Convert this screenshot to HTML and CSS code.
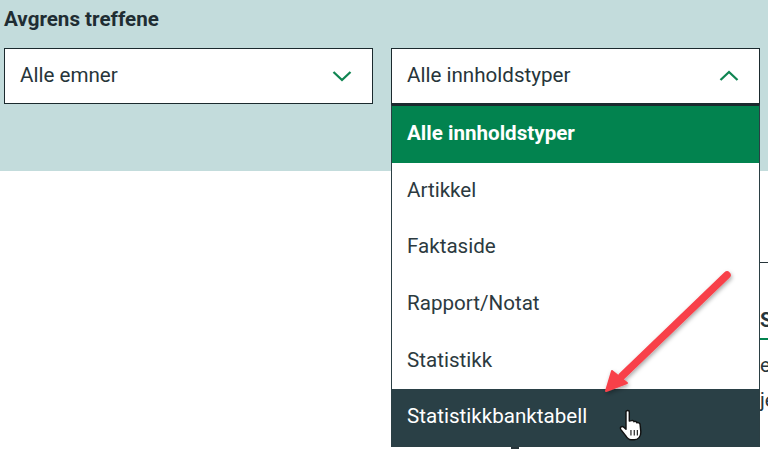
FILE: index.html
```html
<!DOCTYPE html>
<html lang="no">
<head>
<meta charset="utf-8">
<title>Avgrens treffene</title>
<link rel="stylesheet" href="styles.css">
</head>
<body>
<section class="band">
  <h2 class="title">Avgrens treffene</h2>
  <div class="filters">
    <div class="select">
      <span>Alle emner</span>
      <svg class="chev" width="20" height="12" viewBox="0 0 20 12"><path d="M1.5 2 L10 10 L18.500 2" fill="none" stroke="#0f8552" stroke-width="2.300"/></svg>
    </div>
    <div class="select-wrap">
      <div class="select">
        <span>Alle innholdstyper</span>
        <svg class="chev" width="20" height="12" viewBox="0 0 20 12"><path d="M1.5 10 L10 2 L18.500 10" fill="none" stroke="#0f8552" stroke-width="2.300"/></svg>
      </div>
      <ul class="menu">
        <li class="item selected">Alle innholdstyper</li>
        <li class="item">Artikkel</li>
        <li class="item">Faktaside</li>
        <li class="item">Rapport/Notat</li>
        <li class="item">Statistikk</li>
        <li class="item hover">Statistikkbanktabell</li>
      </ul>
    </div>
  </div>
</section>
<aside class="behind">
  <span class="frag head">S</span>
  <span class="frag rule"></span>
  <span class="frag l1">e</span>
  <span class="frag l2">je</span>
  <span class="frag tick"></span>
</aside>
<svg class="arrow" width="768" height="455" viewBox="0 0 768 455">
  <defs><filter id="sh" x="-20%" y="-20%" width="140%" height="140%"><feDropShadow dx="1" dy="2" stdDeviation="2" flood-color="#000" flood-opacity=".35"/></filter></defs>
  <g filter="url(#sh)">
    <path d="M727 275 L622 376" stroke="#f8414a" stroke-width="7.500" stroke-linecap="round" fill="none"/>
    <path d="M606 391 L612 371 L627 383 Z" fill="#f8414a" stroke="#f8414a" stroke-width="2" stroke-linejoin="round"/>
  </g>
</svg>
<svg class="cursor" width="27" height="33" viewBox="0 0 24 30">
  <path d="M7 2.5 C7 1 10 1 10 2.5 V11 L12 10.6 C13 10.2 14 10.6 14.3 11.5 C15.3 11 16.6 11.4 16.9 12.5 C18 12 19.6 12.6 19.8 14 L20.500 21 C20.600 25 18 28 14.500 28 H11.500 C9 28 8 26.500 6.500 24 L2.200 18.500 C1 16.600 3.400 15 5 16.500 L7 18.500 Z" fill="#fff" stroke="#111" stroke-width="1.300" stroke-linejoin="round"/>
  <path d="M11.500 19V24M14.500 19V24M17.300 19V24" stroke="#111" stroke-width="1"/>
</svg>
</body>
</html>
```
FILE: styles.css
```css
* { box-sizing: border-box; }
html, body { margin: 0; height: 455px; overflow: hidden; background: #fff; }
body { position: relative; font-family: Roboto, "Liberation Sans", sans-serif; color: #27353a; }
.band { height: 171px; background: #c3dcdc; padding: 8px 8px 0 4px; }
.title { margin: 0 0 18px; font-size: 20.6px; line-height: 22px; font-weight: 700; color: #1f2d33; }
.filters { display: grid; grid-template-columns: 369px 369px; column-gap: 18px; }
.select { height: 56px; border: 1px solid #1b2a2e; background: #fff; display: flex; align-items: center; justify-content: space-between; padding: 0 20px 2px 15px; font-size: 20.6px; }
.chev { margin-top: 2px; }
.select-wrap { position: relative; z-index: 2; }
.menu { list-style: none; margin: 0; padding: 0; border: 1px solid #2b3f44; border-top: 2px solid #1b2a2e; background: #fff; width: 369px; }
.item { height: 56.6px; display: flex; align-items: center; padding: 0 15px 2px; font-size: 20.6px; color: #2c3a40; }
.selected { background: #02834f; color: #fff; font-weight: 700; }
.hover { background: #2a4046; color: #fff; }
.behind { position: absolute; inset: 0; }
.frag { position: absolute; left: 760px; font-size: 20px; line-height: 24px; color: #27353a; }
.head { top: 308px; font-weight: 700; }
.behind::before { content: ""; position: absolute; left: 760px; right: 0; top: 262px; height: 1px; background: #27353a; }
.rule { top: 338px; right: 0; height: 2px; background: #02834f; }
.l1 { top: 353px; }
.l2 { top: 388px; }
.tick { left: 511px; top: 447px; width: 8px; height: 2px; background: #27353a; }
.arrow { position: absolute; left: 0; top: 0; pointer-events: none; z-index: 3; }
.cursor { position: absolute; left: 618px; top: 409px; z-index: 4; }
```
